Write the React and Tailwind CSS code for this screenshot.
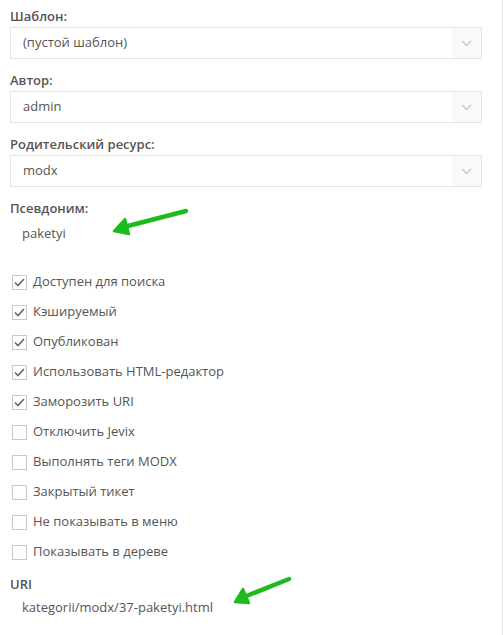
import { Fragment } from "react";

const font = { fontFamily: '"Open Sans", "Liberation Sans", sans-serif' };

const checks = [
  ["Доступен для поиска", true],
  ["Кэшируемый", true],
  ["Опубликован", true],
  ["Использовать HTML-редактор", true],
  ["Заморозить URI", true],
  ["Отключить Jevix", false],
  ["Выполнять теги MODX", false],
  ["Закрытый тикет", false],
  ["Не показывать в меню", false],
  ["Показывать в дереве", false],
];

const Label = ({ children, className = "" }) => (
  <div className={`text-[13px] leading-[18px] font-semibold text-[#555] ${className}`}>
    {children}
  </div>
);

const Select = ({ value }) => (
  <div className="mt-[2px] flex h-[32px] border border-[#e4e4e4] bg-white">
    <div className="flex flex-1 items-center pl-[12px] text-[13px] text-[#555]">{value}</div>
    <div className="flex w-[29px] items-center justify-center bg-[#f9f9f9]">
      <svg width="11" height="7" viewBox="0 0 11 7" fill="none">
        <path d="M1 1l4.5 4.5L10 1" stroke="#c4c4c4" strokeWidth="1.2" />
      </svg>
    </div>
  </div>
);

const Checkbox = ({ checked }) => (
  <div className="flex h-[15px] w-[15px] items-center justify-center border border-[#c8c8c8] bg-white">
    {checked && (
      <svg width="11" height="9" viewBox="0 0 11 9" fill="none">
        <path d="M1 4.5l3 3L10 1" stroke="#666" strokeWidth="1.6" />
      </svg>
    )}
  </div>
);

export default function App() {
  return (
    <div style={font} className="relative h-[635px] w-[503px] border-r border-[#dcdcdc] bg-white pl-[10px] pr-[20px] pt-[7px]">
      <Label>Шаблон:</Label>
      <Select value="(пустой шаблон)" />
      <Label className="mt-[12px]">Автор:</Label>
      <Select value="admin" />
      <Label className="mt-[12px]">Родительский ресурс:</Label>
      <Select value="modx" />
      <Label className="mt-[12px]">Псевдоним:</Label>
      <div className="mt-[7px] pl-[12px] text-[13px] leading-[18px] text-[#555]">paketyi</div>

      <div className="mt-[25px] flex flex-col">
        {checks.map(([text, on]) => (
          <Fragment key={text}>
            <div className="flex h-[30px] items-center gap-[6px] pl-[2px]">
              <Checkbox checked={on} />
              <span className="text-[13px] text-[#555]">{text}</span>
            </div>
          </Fragment>
        ))}
      </div>

      <Label className="mt-[8px]">URI</Label>
      <div className="mt-[5px] pl-[12px] text-[13px] leading-[18px] text-[#555]">kategorii/modx/37-paketyi.html</div>

      <svg className="absolute left-[110px] top-[205px]" width="82" height="32" viewBox="0 0 82 32" fill="none">
        <path d="M76 6L14 22" stroke="#1dbb1d" strokeWidth="4.5" strokeLinecap="round" />
        <path d="M4 26L15 14L19 29Z" fill="#1dbb1d" stroke="#1dbb1d" strokeWidth="2.5" strokeLinejoin="round" />
      </svg>
      <svg className="absolute left-[230px] top-[572px]" width="66" height="36" viewBox="0 0 66 36" fill="none">
        <path d="M59 7L14 25" stroke="#1dbb1d" strokeWidth="4.5" strokeLinecap="round" />
        <path d="M5 30L13 17L19 31Z" fill="#1dbb1d" stroke="#1dbb1d" strokeWidth="2.5" strokeLinejoin="round" />
      </svg>
    </div>
  );
}
